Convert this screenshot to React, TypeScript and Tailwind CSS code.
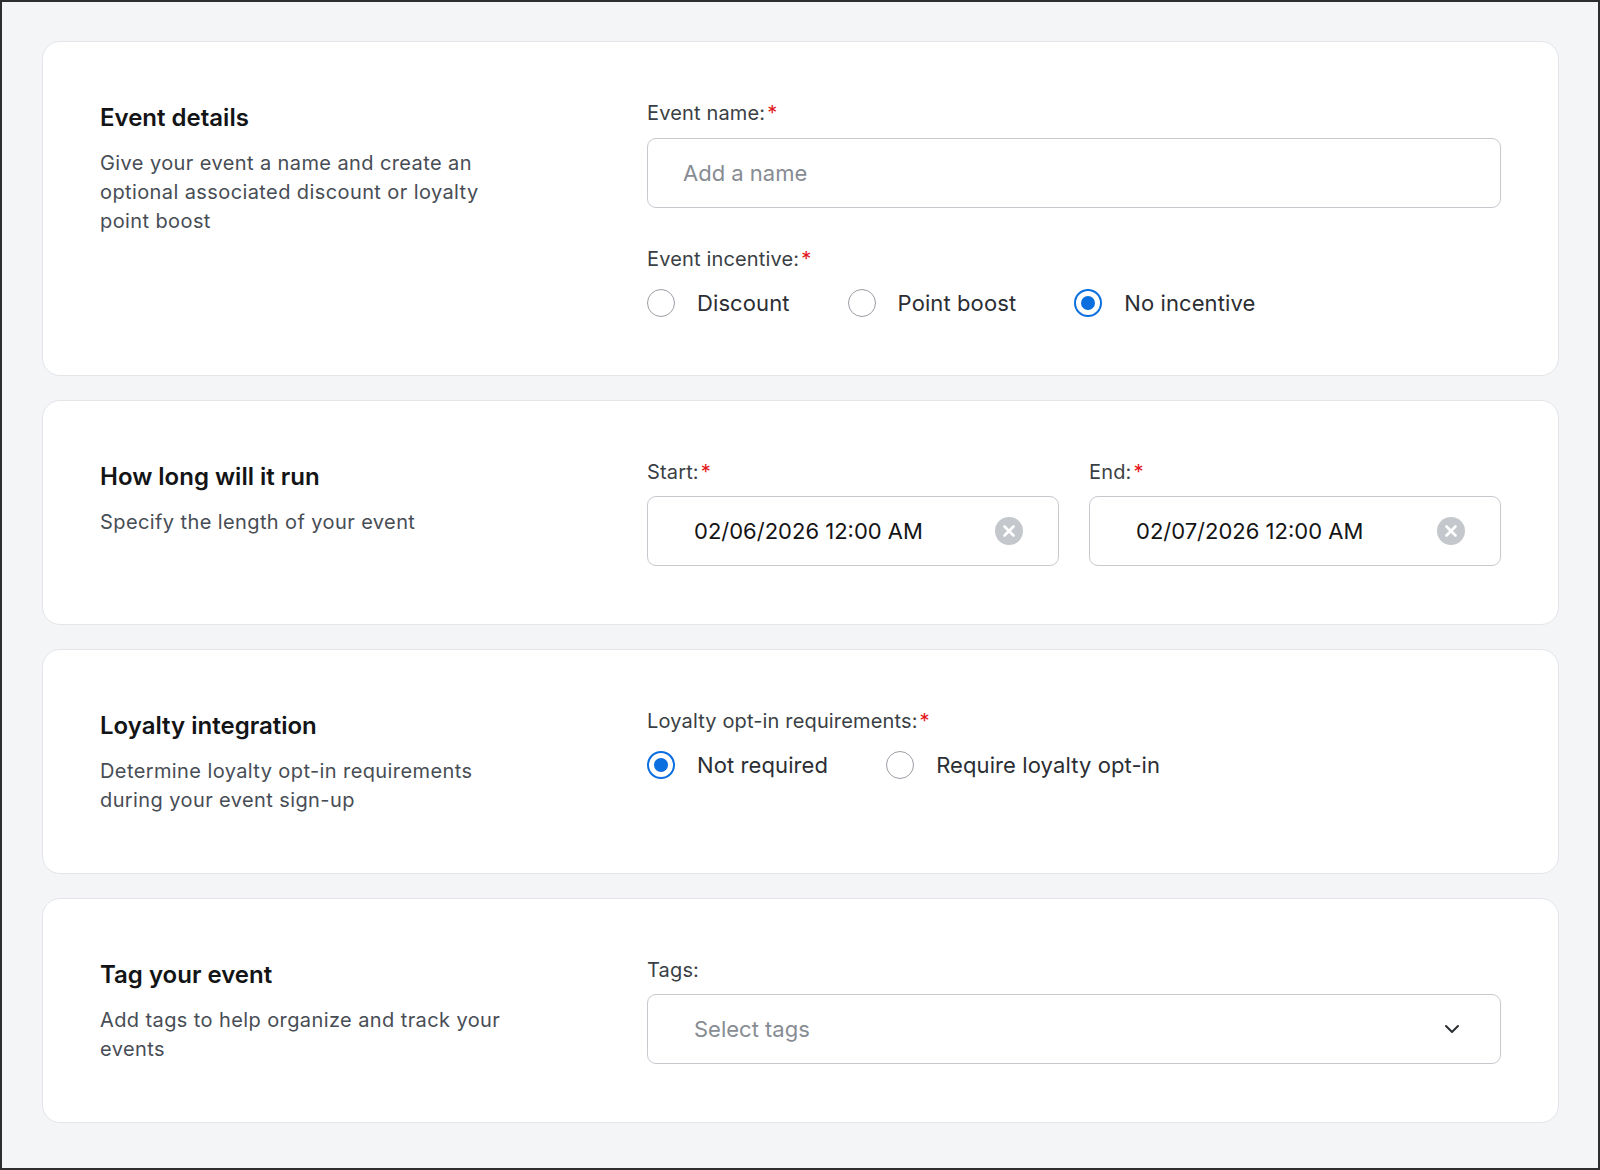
import React from "react";

const Req = () => <span className="text-[#e3161b] ml-[2px]">*</span>;

function Label({ children, req = false }: { children: React.ReactNode; req?: boolean }) {
  return (
    <div className="text-[20px] leading-[24px] tracking-[0.15px] text-[#3a3f45] h-[24px]">
      {children}
      {req && <Req />}
    </div>
  );
}

function Radio({ label, checked = false }: { label: string; checked?: boolean }) {
  return (
    <label className="flex items-center gap-[22px] cursor-pointer">
      {checked ? (
        <span className="w-[28px] h-[28px] rounded-full border-2 border-[#0b6fe0] flex items-center justify-center bg-white">
          <span className="w-[14px] h-[14px] rounded-full bg-[#0b6fe0]" />
        </span>
      ) : (
        <span className="w-[28px] h-[28px] rounded-full border-[1.5px] border-[#9a9ea4] bg-white" />
      )}
      <span className="text-[22px] leading-[28px] tracking-[0.1px] text-[#2b2e33]">{label}</span>
    </label>
  );
}

function Section({
  title,
  desc,
  children,
}: {
  title: string;
  desc: string;
  children: React.ReactNode;
}) {
  return (
    <div className="bg-white border border-[#e3e5e8] rounded-[18px] px-[57px] pt-[59px] pb-[58px] flex justify-between">
      <div className="w-[420px]">
        <div className="text-[24px] leading-[33px] font-semibold text-[#131416]">{title}</div>
        <div className="mt-[15px] text-[20px] leading-[29px] tracking-[0.4px] text-[#474d55]">{desc}</div>
      </div>
      <div className="w-[854px]">{children}</div>
    </div>
  );
}

function ClearIcon() {
  return (
    <svg width="28" height="28" viewBox="0 0 28 28">
      <circle cx="14" cy="14" r="14" fill="#c4c7cb" />
      <path d="M9.5 9.5 L18.5 18.5 M18.5 9.5 L9.5 18.5" stroke="#fff" strokeWidth="2.6" strokeLinecap="round" />
    </svg>
  );
}

function DateInput({ value }: { value: string }) {
  return (
    <div className="h-[70px] border-[1.5px] border-[#c6c9ce] rounded-[9px] bg-white flex items-center justify-between pl-[46px] pr-[35px]">
      <span className="text-[22px] text-[#141414]">{value}</span>
      <ClearIcon />
    </div>
  );
}

export default function App() {
  return (
    <div
      className="w-[1600px] h-[1170px] border-2 border-[#2e2e2e] bg-[#f4f5f7] pl-[40px] pr-[39px] pt-[39px] flex flex-col gap-[24px]"
      style={{ fontFamily: "Inter, 'Noto Sans', sans-serif" }}
    >
      <Section
        title="Event details"
        desc="Give your event a name and create an optional associated discount or loyalty point boost"
      >
        <Label req>Event name:</Label>
        <div className="mt-[13px] h-[70px] border-[1.5px] border-[#c6c9ce] rounded-[9px] bg-white flex items-center pl-[35px]">
          <span className="text-[22px] text-[#878c93]">Add a name</span>
        </div>
        <div className="mt-[39px]">
          <Label req>Event incentive:</Label>
        </div>
        <div className="mt-[18px] flex items-center gap-[58px]">
          <Radio label="Discount" />
          <Radio label="Point boost" />
          <Radio label="No incentive" checked />
        </div>
      </Section>

      <Section title="How long will it run" desc="Specify the length of your event">
        <div className="grid grid-cols-2 gap-[30px]">
          <div>
            <Label req>Start:</Label>
            <div className="mt-[12px]">
              <DateInput value="02/06/2026 12:00 AM" />
            </div>
          </div>
          <div>
            <Label req>End:</Label>
            <div className="mt-[12px]">
              <DateInput value="02/07/2026 12:00 AM" />
            </div>
          </div>
        </div>
      </Section>

      <Section
        title="Loyalty integration"
        desc="Determine loyalty opt-in requirements during your event sign-up"
      >
        <Label req>Loyalty opt-in requirements:</Label>
        <div className="mt-[18px] flex items-center gap-[58px]">
          <Radio label="Not required" checked />
          <Radio label="Require loyalty opt-in" />
        </div>
      </Section>

      <Section title="Tag your event" desc="Add tags to help organize and track your events">
        <Label>Tags:</Label>
        <div className="mt-[12px] h-[70px] border-[1.5px] border-[#c6c9ce] rounded-[9px] bg-white flex items-center justify-between pl-[46px] pr-[40px]">
          <span className="text-[22px] text-[#878c93]">Select tags</span>
          <svg width="16" height="10" viewBox="0 0 16 10">
            <path d="M2 2 L8 8 L14 2" stroke="#2b2e33" strokeWidth="2" fill="none" strokeLinecap="round" strokeLinejoin="round" />
          </svg>
        </div>
      </Section>
    </div>
  );
}
